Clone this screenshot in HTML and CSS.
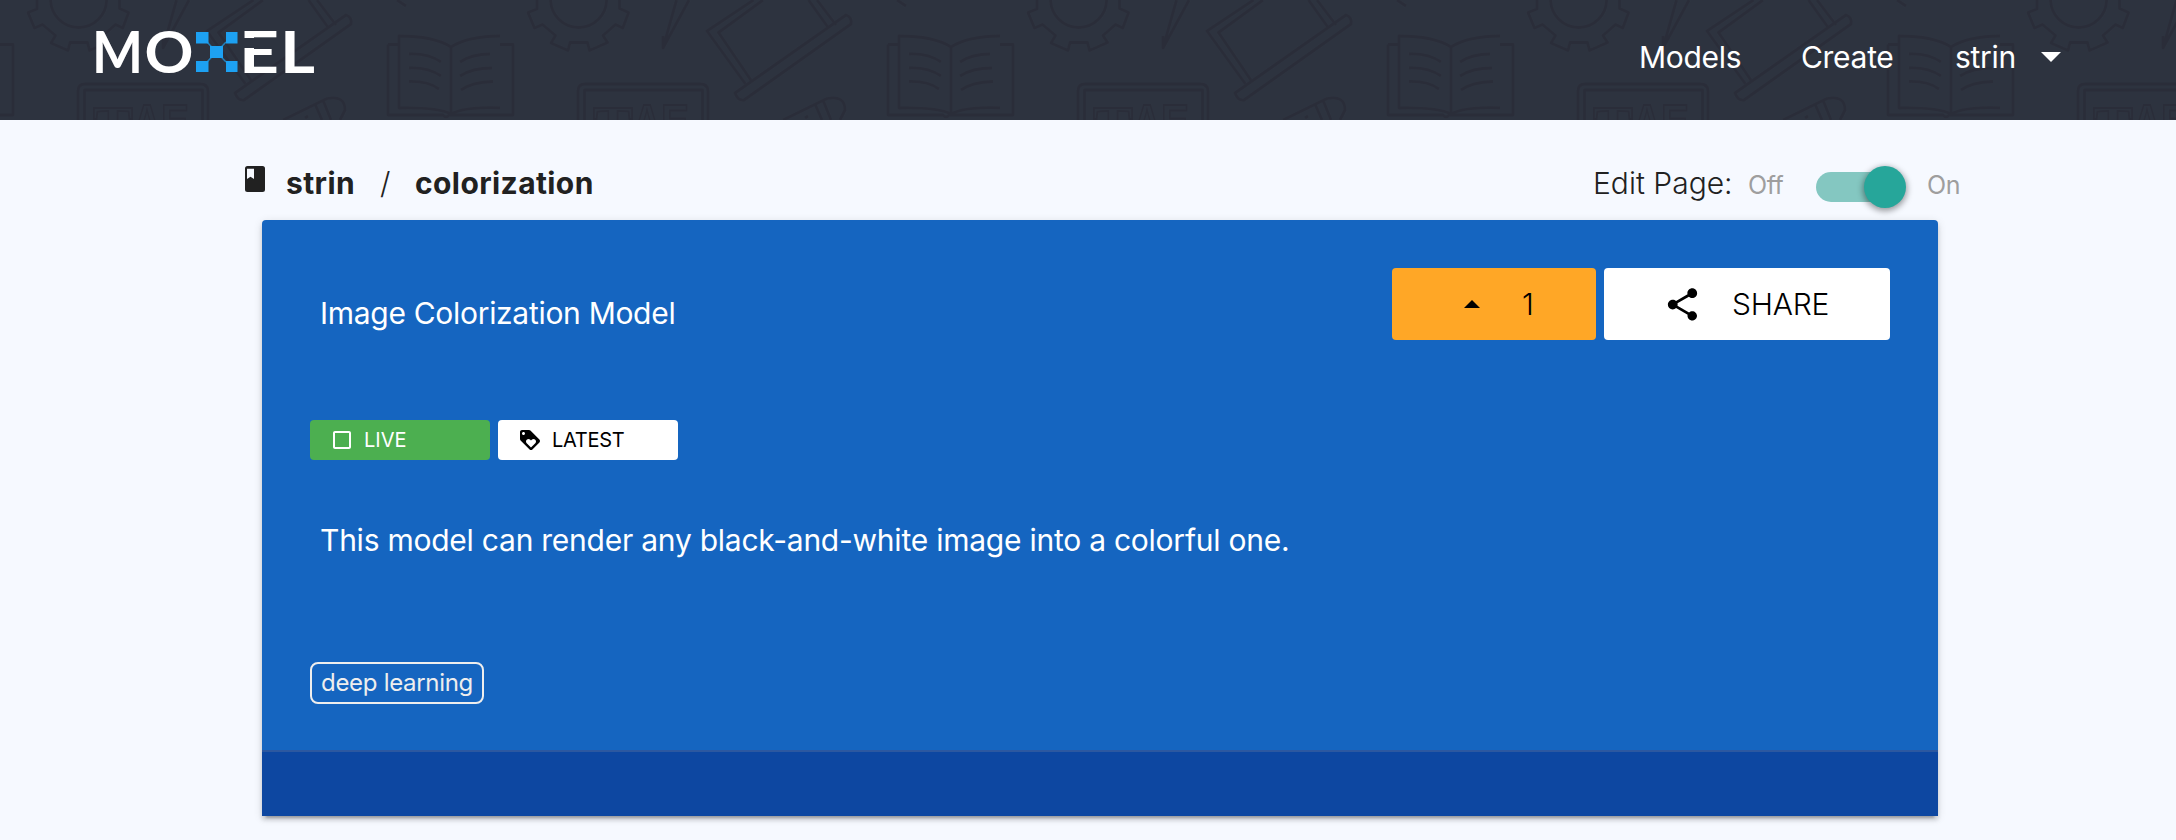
FILE: index.html
```html
<!DOCTYPE html>
<html lang="en">
<head>
<meta charset="utf-8">
<title>strin / colorization</title>
<link rel="stylesheet" href="styles.css">
</head>
<body>
<header class="topbar">
  <svg class="topbar-pattern" width="2176" height="120" aria-hidden="true">
    <defs>
      <pattern id="doodles" width="500" height="120" patternUnits="userSpaceOnUse">
        <g class="doodle">
          <circle cx="78.6" cy="-.5" r="28"/>
          <path d="M37 0V9L28 12.5L34.500 28L42.500 24.500L55.500 35.500L51 43L68 50.500L70 42.500H87.500L89.500 50.500L107.500 42.500L103 35.500L115.500 24.500L122.800 28L128.600 12.500L119.500 8.500V0"/>
          <path d="M176.500 0L163 48L189 0M163 48V36"/>
          <path d="M253.500 0L207 31L245.500 84M263 0L218.500 32.500L251.500 81M308.500 0L328.500 28M317 0L336 25"/>
          <path d="M235 93L346 15Q352 17 351 24L244 100Q238 101 235 93Z"/>
          <path d="M397 0L406 6"/>
          <path d="M78 120V91Q78 84 85 84H200Q208 84 208 91V120M84.500 120V90H202.500V120"/>
          <path d="M283 120L327 98.500Q345 95 345 110L340 120M315 104L322 120M323 100L331 120M305 118L308 116"/>
          <path d="M388 44.500H399M502 44.500H513V115H449Q446 119 443 115H388V44.500M399 36Q434 36 451 47Q468 36 502 36V108Q466 106 451 114Q437 107 399 108ZM451 47V114"/>
          <path d="M409 54Q428 53 441 62M409 68Q428 67 441 76M409 81.500Q428 81 439 89M460 62Q472 54 490 54M460 76Q472 68 492 68M461 90Q472 82 493 81.500"/>
          <path d="M-12 44.500H2M2 44.500H13V115H-12"/>
        </g>
        <g class="doodle-text">
          <text class="serif" x="93" y="147">T</text>
          <text x="133" y="138" textLength="28" lengthAdjust="spacingAndGlyphs">A</text>
          <text x="161" y="138" textLength="28" lengthAdjust="spacingAndGlyphs">E</text>
        </g>
      </pattern>
    </defs>
    <rect width="2176" height="120" fill="url(#doodles)"/>
  </svg>
  <a class="logo" href="#" aria-label="Moxel">
    <svg width="236" height="100" viewBox="84 0 236 100">
      <g class="logo-text">
        <text x="92" y="73" textLength="51" lengthAdjust="spacingAndGlyphs">M</text>
        <text x="144.500" y="73" textLength="49" lengthAdjust="spacingAndGlyphs">O</text>
        <text x="239" y="73" textLength="40" lengthAdjust="spacingAndGlyphs">E</text>
        <text x="280" y="73" textLength="35" lengthAdjust="spacingAndGlyphs">L</text>
      </g>
      <rect class="logo-gap" x="242" y="38" width="36" height="10"/>
      <path class="logo-link" d="M207 42L226 62M226 42L207 62"/>
      <path class="logo-x" d="M196 32h12.500v11.500h-12.500zM226 32h11.500v11.500h-11.500zM210 46h13v12h-13zM196 61h12.500v11h-12.500zM226 61h11.500v11h-11.500z"/>
    </svg>
  </a>
  <nav class="nav">
    <a class="nav-models" href="#">Models</a>
    <a class="nav-create" href="#">Create</a>
    <a class="nav-user" href="#">strin</a>
    <svg width="20" height="10" viewBox="0 0 20 10"><path d="M0 0H20L10 10Z" fill="#fff"/></svg>
  </nav>
</header>
<main class="page">
  <div class="titlebar">
    <svg class="book" width="20" height="26" viewBox="0 0 20 26"><path fill="#212121" fill-rule="evenodd" d="M2.500 0H17.500Q20 0 20 2.500V23.500Q20 26 17.500 26H2.500Q0 26 0 23.500V2.500Q0 0 2.500 0ZM2 2.700V13L5.500 10.800L9 13V2.700Z"/></svg>
    <a class="crumb crumb-user" href="#">strin</a>
    <span class="slash">/</span>
    <a class="crumb crumb-model" href="#">colorization</a>
    <div class="edit">
      <span class="edit-label">Edit Page:</span>
      <span class="edit-off">Off</span>
      <span class="track"><span class="thumb"></span></span>
      <span class="edit-on">On</span>
    </div>
  </div>
  <section class="card">
    <div class="card-body">
      <div class="card-head">
        <h1 class="title">Image Colorization Model</h1>
        <div class="actions">
          <button class="btn vote"><svg width="16" height="8" viewBox="0 0 16 8"><path d="M0 8L8 0L16 8Z"/></svg><span>1</span></button>
          <button class="btn share"><svg width="39" height="39" viewBox="0 0 24 24"><path d="M18 16.080c-.76 0-1.440.3-1.960.77L8.910 12.700c.05-.23.09-.46.09-.7s-.04-.47-.09-.7l7.050-4.110c.54.5 1.250.81 2.040.81 1.660 0 3-1.340 3-3s-1.340-3-3-3-3 1.340-3 3c0 .24.04.47.09.7L8.040 9.810C7.500 9.310 6.790 9 6 9c-1.660 0-3 1.340-3 3s1.340 3 3 3c.79 0 1.500-.31 2.040-.81l7.120 4.160c-.05.21-.08.43-.08.65 0 1.610 1.310 2.920 2.920 2.920s2.920-1.310 2.920-2.920-1.310-2.920-2.920-2.920z"/></svg><span>SHARE</span></button>
        </div>
      </div>
      <div class="badges">
        <span class="badge live"><svg width="24" height="24" viewBox="0 0 24 24"><path fill="#fff" d="M19 5v14H5V5h14m0-2H5c-1.100 0-2 .9-2 2v14c0 1.100.9 2 2 2h14c1.100 0 2-.9 2-2V5c0-1.100-.9-2-2-2z"/></svg><span>LIVE</span></span>
        <span class="badge latest"><svg width="24" height="24" viewBox="0 0 24 24"><path d="M21.410 11.580l-9-9C12.050 2.220 11.550 2 11 2H4c-1.100 0-2 .9-2 2v7c0 .55.220 1.050.59 1.420l9 9c.36.36.86.58 1.410.58.55 0 1.050-.22 1.410-.59l7-7c.37-.36.59-.86.59-1.410 0-.55-.23-1.060-.59-1.420zM5.500 7C4.670 7 4 6.330 4 5.500S4.670 4 5.500 4 7 4.670 7 5.500 6.330 7 5.500 7zm11.770 8.270L13 19.540l-4.270-4.270C8.280 14.810 8 14.190 8 13.500c0-1.380 1.120-2.500 2.500-2.500.69 0 1.320.28 1.770.74l.73.72.73-.73c.45-.45 1.080-.73 1.770-.73 1.380 0 2.500 1.120 2.500 2.500 0 .69-.28 1.320-.73 1.770z"/></svg><span>LATEST</span></span>
      </div>
      <p class="description">This model can render any black-and-white image into a colorful one.</p>
      <span class="tag">deep learning</span>
    </div>
    <div class="card-foot"></div>
  </section>
</main>
</body>
</html>
```
FILE: styles.css
```css
* { box-sizing: border-box; }
body {
  margin: 0;
  height: 840px;
  overflow: hidden;
  background: #f6f9ff;
  color: #212121;
  font-family: Inter, "Liberation Sans", sans-serif;
  font-size: 30px;
  line-height: 40px;
}
a { color: inherit; text-decoration: none; }
svg { display: block; flex: none; }
span, a { white-space: nowrap; }

.topbar {
  position: relative;
  display: flex;
  justify-content: space-between;
  height: 120px;
  background: #2d333f;
  color: #fff;
}
.topbar-pattern { position: absolute; inset: 0; }
.doodle { fill: none; stroke: #2a2d39; stroke-width: 2.800; stroke-linejoin: round; }
.doodle-text {
  fill: none;
  stroke: #2a2d39;
  stroke-width: 2;
  font: bold 48px "Liberation Sans", sans-serif;
}
.doodle-text .serif { font: bold 60px "Liberation Serif", serif; }
.logo { position: relative; padding-left: 84px; }
.logo-text { fill: #fff; font: bold 58px Lato, sans-serif; }
.logo-gap { fill: #2d333f; }
.logo-link { stroke: #1da1f2; stroke-width: 1.500; opacity: .7; }
.logo-x { fill: #1da1f2; }
.nav { position: relative; display: flex; padding: 37px 115px 0 0; }
.nav a { letter-spacing: -.3px; }
.nav-models { width: 162px; }
.nav-create { width: 154px; letter-spacing: -.1px; }
.nav-user { width: 86px; }
.nav svg { margin-top: 15px; }

.page { width: 1676px; margin-left: 262px; }
.titlebar { display: flex; height: 100px; padding-top: 43px; margin: 0 -24px 0 -17px; }
.book { margin-top: 3px; margin-right: 21px; }
.crumb { font-weight: 700; letter-spacing: .4px; }
.crumb-user { width: 94px; }
.slash { width: 35px; font-weight: 300; }
.edit { display: flex; margin-left: auto; }
.edit-label { width: 155px; font-weight: 300; }
.edit-off, .edit-on { color: #9e9e9e; font-size: 25px; font-weight: 400; padding-top: 2px; letter-spacing: -.4px; }
.edit-off { width: 68px; }
.track { position: relative; width: 84px; height: 30px; margin: 9px 27px 0 0; border-radius: 15px; background: #84c7c1; }
.thumb {
  position: absolute;
  top: -6px;
  right: -6px;
  width: 42px;
  height: 42px;
  border-radius: 50%;
  background: #26a69a;
  box-shadow: 0 2px 6px 1px rgba(0, 0, 0, .4);
}
.edit-on { width: 35px; }

.card {
  height: 596px;
  border-radius: 4px 4px 0 0;
  background: #1565c0;
  box-shadow: 0 4px 4px 0 rgba(0, 0, 0, .14), 0 2px 10px 0 rgba(0, 0, 0, .12), 0 6px 2px -4px rgba(0, 0, 0, .2);
}
.card-body { display: flex; flex-direction: column; align-items: flex-start; height: 530px; padding: 48px 48px 0; }
.card-head { display: flex; justify-content: space-between; width: 100%; height: 152px; }
.title { margin: 0; padding: 25px 0 0 10px; color: #fff; font-size: 30px; font-weight: 400; line-height: 40px; letter-spacing: -.3px; }
.actions { display: flex; gap: 8px; }
.btn {
  display: flex;
  align-items: center;
  height: 72px;
  padding: 0;
  border: 0;
  border-radius: 4px;
  font: 300 30px/40px Inter, sans-serif;
  color: #000;
}
.vote { width: 204px; padding-left: 72px; gap: 42px; background: #ffa726; }
.share { width: 286px; padding-left: 59px; gap: 30px; background: #fff; letter-spacing: -.2px; }
.badges { display: flex; gap: 8px; }
.badge { display: flex; align-items: center; gap: 10px; width: 180px; height: 40px; padding-left: 20px; border-radius: 4px; font-size: 20px; }
.live { background: #4caf50; color: #fff; }
.latest { background: #fff; color: #000; }
.latest span { letter-spacing: -.3px; }
.description { margin: 60px 0 0; padding-left: 10px; color: #fff; letter-spacing: -.240px; }
.tag {
  height: 42px;
  margin-top: 102px;
  padding: 0 9px;
  border: 2px solid #eee;
  border-radius: 8px;
  color: #eee;
  font-size: 24px;
  line-height: 38px;
  letter-spacing: -.3px;
}
.card-foot { height: 66px; border-top: 2px solid #2c58a0; background: #0d47a1; }
```
